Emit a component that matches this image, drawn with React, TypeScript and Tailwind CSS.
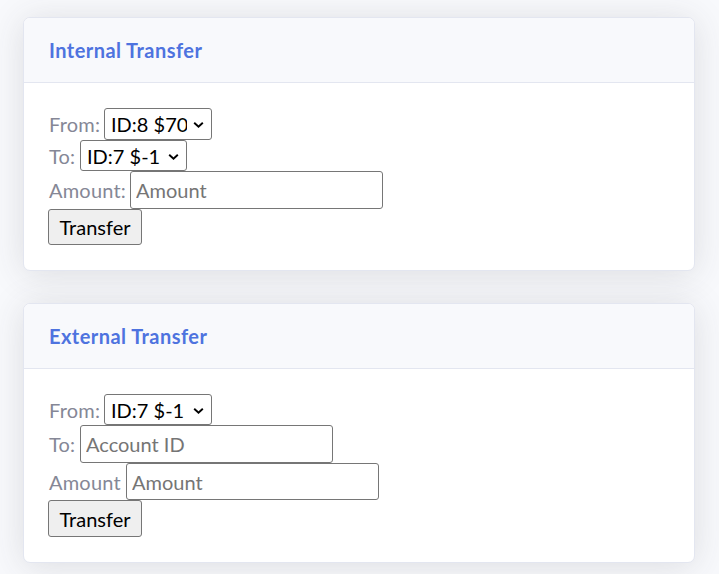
import React from "react";

const font = { fontFamily: "Lato, 'Open Sans', sans-serif" };

function Chevron() {
  return (
    <svg width="11" height="7" viewBox="0 0 11 7" className="pointer-events-none absolute right-[8px] top-1/2 mt-[1px] -translate-y-1/2">
      <path d="M1.2 1.2 L5.5 5.3 L9.8 1.2" fill="none" stroke="#000" strokeWidth="1.9" />
    </svg>
  );
}

function FakeSelect({ value, width, height }: { value: string; width: string; height: string }) {
  return (
    <div className={`relative ${width} ${height}`}>
      <select
        defaultValue={value}
        className="h-full w-full appearance-none rounded-[3px] border border-[#767676] bg-white pl-[6px] pr-[24px] text-[20px] leading-none text-black outline-none"
      >
        <option>{value}</option>
      </select>
      <Chevron />
    </div>
  );
}

function Card({ title, children }: { title: string; children: React.ReactNode }) {
  return (
    <div className="overflow-hidden rounded-[7px] border border-[#e3e6f0] bg-white shadow-[0_3px_35px_0_rgba(58,59,69,0.15)]">
      <div className="flex h-[65px] items-center border-b border-[#e3e6f0] bg-[#f8f9fc] px-[25px]">
        <h6 className="text-[20px] font-bold leading-[24px] tracking-[0.45px] text-[#4e73df]">{title}</h6>
      </div>
      <div className="flex flex-col px-[25px] pb-[25px] pt-[25px]">{children}</div>
    </div>
  );
}

function Row({ label, w, children }: { label: string; w: string; children: React.ReactNode }) {
  return (
    <div className="flex items-center">
      <span className={`${w} shrink-0 text-[20px] leading-[30px] tracking-[0.2px] text-[#858796]`}>{label}</span>
      {children}
    </div>
  );
}

function TextInput({ placeholder, h }: { placeholder: string; h: string }) {
  return (
    <input
      placeholder={placeholder}
      className={`${h} w-[253px] rounded-[3px] border border-[#767676] bg-white px-[5px] text-[20px] text-black outline-none placeholder:text-[#757575]`}
    />
  );
}

function Btn({ h }: { h: string }) {
  return (
    <div className="flex">
      <button className={`${h} -ml-[1px] w-[94px] rounded-[3px] border border-[#767676] bg-[#efefef] text-[20px] text-black`}>
        Transfer
      </button>
    </div>
  );
}

export default function App() {
  return (
    <div className="min-h-[574px] w-full bg-[#f8f9fc] pl-[23px] pr-[24px] pt-[17px]" style={font}>
      <Card title="Internal Transfer">
        <Row label="From:" w="w-[55px]">
          <FakeSelect value="ID:8 $70" width="w-[108px]" height="h-[32px]" />
        </Row>
        <Row label="To:" w="w-[31px]">
          <FakeSelect value="ID:7 $-1" width="w-[107px]" height="h-[31px]" />
        </Row>
        <Row label="Amount:" w="w-[81px]">
          <TextInput placeholder="Amount" h="h-[38px]" />
        </Row>
        <Btn h="h-[36px]" />
      </Card>
      <div className="h-[32px]" />
      <Card title="External Transfer">
        <Row label="From:" w="w-[55px]">
          <FakeSelect value="ID:7 $-1" width="w-[108px]" height="h-[31px]" />
        </Row>
        <Row label="To:" w="w-[31px]">
          <TextInput placeholder="Account ID" h="h-[38px]" />
        </Row>
        <Row label="Amount" w="w-[77px]">
          <TextInput placeholder="Amount" h="h-[37px]" />
        </Row>
        <Btn h="h-[37px]" />
      </Card>
    </div>
  );
}
